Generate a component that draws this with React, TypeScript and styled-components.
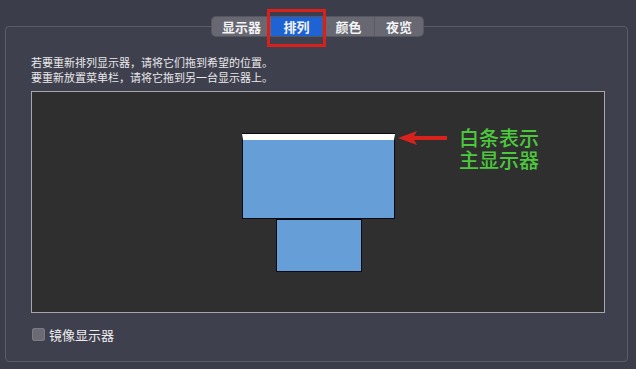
import React from 'react';
import styled, { createGlobalStyle } from 'styled-components';

const GlobalStyle = createGlobalStyle`
  html, body {
    margin: 0;
    padding: 0;
    background: #3c3d4a;
  }
  body {
    font-family: "Noto Sans CJK SC", "Noto Sans", sans-serif;
    color: #e6e6ea;
  }
`;

const Page = styled.div`
  width: 636px;
  height: 369px;
  padding: 26px 0 0 5px;
  box-sizing: border-box;
  overflow: hidden;
`;

const Panel = styled.div`
  width: 623px;
  height: 336px;
  box-sizing: border-box;
  border: 1px solid #5b5c69;
  border-radius: 4px;
  background: #3f404d;
  display: flex;
  flex-direction: column;
`;

const TabBar = styled.div`
  display: flex;
  align-self: center;
  margin: -10px 0 0 2px;
  height: 19px;
  border-radius: 4px;
  background: #676872;
  box-shadow: 0 0 0 1px #55565f;
  position: relative;
`;

const Tab = styled.div<{ $active?: boolean; $w: number }>`
  position: relative;
  width: ${p => p.$w}px;
  display: flex;
  align-items: center;
  justify-content: center;
  font-size: 13px;
  font-weight: 600;
  color: #f4f4f6;
  background: ${p => (p.$active ? '#1d63d3' : 'transparent')};
  border-left: ${p => (p.$active ? 'none' : '1px solid #5a5b64')};
  &:first-child {
    border-left: none;
    border-radius: 4px 0 0 4px;
  }
  &:last-child {
    border-radius: 0 4px 4px 0;
  }
`;

const Highlight = styled.div`
  position: absolute;
  left: -4px;
  right: -4px;
  top: -8px;
  bottom: -11px;
  border: 3px solid #d8201c;
  pointer-events: none;
`;

const Hint = styled.div`
  margin: 19px 0 0 25px;
  font-size: 11px;
  line-height: 15px;
  color: #e9e9ec;
`;

const Canvas = styled.div`
  position: relative;
  margin: 6px 0 0 25px;
  width: 574px;
  height: 222px;
  box-sizing: border-box;
  border: 1px solid #a7a7ad;
  background: #2f2f30;
`;

const Monitor = styled.div<{ $x: number; $y: number; $w: number; $h: number; $main?: boolean }>`
  position: absolute;
  left: ${p => p.$x}px;
  top: ${p => p.$y}px;
  width: ${p => p.$w}px;
  height: ${p => p.$h}px;
  box-sizing: border-box;
  border: 1px solid #0a0a14;
  background: #669fd7;
  ${p => (p.$main ? 'border-top: 6px solid #fff; box-shadow: 0 -1px 0 #0a0a14;' : '')}
`;

const Arrow = styled.svg`
  position: absolute;
  left: 366px;
  top: 38px;
`;

const Note = styled.div`
  position: absolute;
  left: 427px;
  top: 36px;
  display: flex;
  flex-direction: column;
  gap: 2px;
  font-size: 20px;
  font-weight: 500;
  line-height: 20px;
  color: #4cc83c;
`;

const CheckRow = styled.label`
  display: flex;
  align-items: center;
  gap: 4px;
  margin: 12px 0 0 26px;
  font-size: 13px;
  color: #ececef;
`;

const Box = styled.span`
  width: 13px;
  height: 13px;
  border-radius: 3px;
  background: #6a6b74;
  box-shadow: inset 0 0 0 1px #7a7b84;
`;

const tabs = [
  { label: '显示器', w: 59 },
  { label: '排列', w: 51, active: true },
  { label: '颜色', w: 51 },
  { label: '夜览', w: 48 },
];

export default function App() {
  return (
    <>
      <GlobalStyle />
      <Page>
        <Panel>
          <TabBar>
            {tabs.map(t => (
              <Tab key={t.label} $w={t.w} $active={t.active}>
                {t.label}
                {t.active && <Highlight />}
              </Tab>
            ))}
          </TabBar>
          <Hint>
            若要重新排列显示器，请将它们拖到希望的位置。
            <br />
            要重新放置菜单栏，请将它拖到另一台显示器上。
          </Hint>
          <Canvas>
            <Monitor $main $x={210} $y={42} $w={153} $h={85} />
            <Monitor $x={244} $y={127} $w={86} $h={53} />
            <Arrow width="50" height="16" viewBox="0 0 50 16">
              <line x1="14" y1="8" x2="49" y2="8" stroke="#d8231d" strokeWidth="4" />
              <polygon points="0,8 19,1 15,8 19,15" fill="#d8231d" />
            </Arrow>
            <Note>
              <span>白条表示</span>
              <span>主显示器</span>
            </Note>
          </Canvas>
          <CheckRow>
            <Box />
            镜像显示器
          </CheckRow>
        </Panel>
      </Page>
    </>
  );
}
